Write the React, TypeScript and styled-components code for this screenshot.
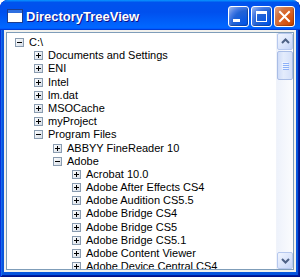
import React from 'react';
import styled, { createGlobalStyle } from 'styled-components';

const Global = createGlobalStyle`
  html, body { margin: 0; padding: 0; background: #ffffff; }
  body { font-family: "Liberation Sans", Arial, sans-serif; }
`;

const Window = styled.div`
  width: 300px;
  height: 277px;
  display: flex;
  flex-direction: column;
  background: #0855dd;
  border-radius: 8px 8px 0 0;
  overflow: hidden;
  box-shadow: inset 1px 0 #0831d9, inset -1px -1px #00138c, inset 2px 0 #166aee,
    inset -2px -2px #001ea0;
`;

const TitleBar = styled.div`
  height: 30px;
  flex: none;
  display: flex;
  align-items: center;
  padding: 2px 5px 0 7px;
  box-sizing: border-box;
  background: linear-gradient(
    180deg,
    #0997ff,
    #0053ee 8%,
    #0050ee 40%,
    #06f 88%,
    #06f 93%,
    #005bff 95%,
    #003dd7 96%,
    #003dd7
  );
  border-radius: 8px 8px 0 0;
`;

const Title = styled.span`
  flex: 1;
  margin-left: 3px;
  color: #ffffff;
  font-weight: bold;
  font-size: 13px;
  text-shadow: 1px 1px #0f1089;
  white-space: nowrap;
`;

const Controls = styled.div`
  display: flex;
  gap: 2px;
  margin-top: 1px;
`;

const CaptionButton = styled.div<{ $close?: boolean }>`
  width: 21px;
  height: 21px;
  box-sizing: border-box;
  border: 1px solid #ffffff;
  border-radius: 3px;
  display: flex;
  align-items: center;
  justify-content: center;
  background: ${(p) =>
    p.$close
      ? 'radial-gradient(circle at 90% 90%, #cc4600 0%, #dc6527 55%, #cd7546 70%, #e5a58a 100%)'
      : 'radial-gradient(circle at 90% 90%, #0054e9 0%, #2263d5 55%, #4479e4 70%, #a3bbec 100%)'};
  box-shadow: inset -1px -1px 1px rgba(0, 0, 0, 0.25);
`;

const Body = styled.div`
  flex: 1;
  display: flex;
  padding: 0 4px 5px;
  min-height: 0;
`;

const Client = styled.div`
  flex: 1;
  display: flex;
  padding: 2px;
  background: #f2f1ec;
  min-height: 0;
`;

const Tree = styled.div`
  flex: 1;
  display: flex;
  border: 1px solid #7f9db9;
  background: #ffffff;
  min-height: 0;
  overflow: hidden;
`;

const TreeList = styled.div`
  flex: 1;
  padding-top: 3px;
  overflow: hidden;
  min-width: 0;
`;

const Row = styled.div<{ $level: number }>`
  height: 13.2px;
  display: flex;
  align-items: center;
  padding-left: ${(p) => 8 + p.$level * 19}px;
  white-space: nowrap;
`;

const Label = styled.span`
  margin-left: 5px;
  font-size: 11px;
  line-height: 13.2px;
  color: #000000;
`;

const ScrollBar = styled.div`
  width: 17px;
  flex: none;
  display: flex;
  flex-direction: column;
  background: linear-gradient(90deg, #eef2fb, #fbfcfe);
  border-left: 1px solid #f0f3fa;
  box-sizing: border-box;
`;

const ScrollButton = styled.div`
  height: 17px;
  flex: none;
  box-sizing: border-box;
  border: 1px solid #b6c8ee;
  border-radius: 2px;
  background: linear-gradient(135deg, #f1f5fe 0%, #d8e3fb 60%, #c4d4f7 100%);
  display: flex;
  align-items: center;
  justify-content: center;
`;

const Thumb = styled.div`
  height: 29px;
  flex: none;
  margin-top: 1px;
  box-sizing: border-box;
  border: 1px solid #a9bde6;
  border-radius: 2px;
  background: linear-gradient(90deg, #cfdcf8 0%, #e4ecfc 40%, #d4e0f9 100%);
  display: flex;
  align-items: center;
  justify-content: center;
`;

const Track = styled.div`
  flex: 1;
`;

const ExpandGlyph = ({ open }: { open: boolean }) => (
  <svg width="9" height="9" viewBox="0 0 9 9" style={{ flex: 'none' }}>
    <defs>
      <linearGradient id={open ? 'gm' : 'gp'} x1="0" y1="0" x2="1" y2="1">
        <stop offset="0" stopColor="#ffffff" />
        <stop offset="1" stopColor="#d3dbe5" />
      </linearGradient>
    </defs>
    <rect x="0.5" y="0.5" width="8" height="8" fill={`url(#${open ? 'gm' : 'gp'})`} stroke="#8a9cb0" />
    <rect x="2" y="4" width="5" height="1" fill="#000" />
    {!open && <rect x="4" y="2" width="1" height="5" fill="#000" />}
  </svg>
);

const AppIcon = () => (
  <svg width="16" height="14" viewBox="0 0 16 14">
    <rect x="0.5" y="0.5" width="15" height="13" fill="#ffffff" stroke="#1c3d8f" />
    <rect x="1" y="1" width="14" height="3" fill="#2f6fe0" />
  </svg>
);

const items: { label: string; level: number; open: boolean }[] = [
  { label: 'C:\\', level: 0, open: true },
  { label: 'Documents and Settings', level: 1, open: false },
  { label: 'ENI', level: 1, open: false },
  { label: 'Intel', level: 1, open: false },
  { label: 'lm.dat', level: 1, open: false },
  { label: 'MSOCache', level: 1, open: false },
  { label: 'myProject', level: 1, open: false },
  { label: 'Program Files', level: 1, open: true },
  { label: 'ABBYY FineReader 10', level: 2, open: false },
  { label: 'Adobe', level: 2, open: true },
  { label: 'Acrobat 10.0', level: 3, open: false },
  { label: 'Adobe After Effects CS4', level: 3, open: false },
  { label: 'Adobe Audition CS5.5', level: 3, open: false },
  { label: 'Adobe Bridge CS4', level: 3, open: false },
  { label: 'Adobe Bridge CS5', level: 3, open: false },
  { label: 'Adobe Bridge CS5.1', level: 3, open: false },
  { label: 'Adobe Content Viewer', level: 3, open: false },
  { label: 'Adobe Device Central CS4', level: 3, open: false },
];

export default function App() {
  return (
    <>
      <Global />
      <Window>
        <TitleBar>
          <AppIcon />
          <Title>DirectoryTreeView</Title>
          <Controls>
            <CaptionButton>
              <svg width="19" height="19" viewBox="0 0 19 19">
                <rect x="4" y="12" width="7" height="3" fill="#fff" />
              </svg>
            </CaptionButton>
            <CaptionButton>
              <svg width="19" height="19" viewBox="0 0 19 19">
                <rect x="4" y="4" width="11" height="3" fill="#fff" />
                <rect x="4.5" y="4.5" width="10" height="10" fill="none" stroke="#fff" />
              </svg>
            </CaptionButton>
            <CaptionButton $close>
              <svg width="19" height="19" viewBox="0 0 19 19">
                <path d="M5 5 L14 14 M14 5 L5 14" stroke="#fff" strokeWidth="2" strokeLinecap="square" />
              </svg>
            </CaptionButton>
          </Controls>
        </TitleBar>
        <Body>
          <Client>
            <Tree>
              <TreeList>
                {items.map((it, i) => (
                  <Row key={i} $level={it.level}>
                    <ExpandGlyph open={it.open} />
                    <Label>{it.label}</Label>
                  </Row>
                ))}
              </TreeList>
              <ScrollBar>
                <ScrollButton>
                  <svg width="9" height="7" viewBox="0 0 9 7">
                    <path d="M1 5 L4.5 1.5 L8 5" fill="none" stroke="#4d6185" strokeWidth="2" />
                  </svg>
                </ScrollButton>
                <Thumb>
                  <svg width="7" height="8" viewBox="0 0 7 8">
                    <rect x="0" y="0" width="6" height="1" fill="#eef4fe" />
                    <rect x="1" y="1" width="6" height="1" fill="#8cb0f8" />
                    <rect x="0" y="2" width="6" height="1" fill="#eef4fe" />
                    <rect x="1" y="3" width="6" height="1" fill="#8cb0f8" />
                    <rect x="0" y="4" width="6" height="1" fill="#eef4fe" />
                    <rect x="1" y="5" width="6" height="1" fill="#8cb0f8" />
                    <rect x="0" y="6" width="6" height="1" fill="#eef4fe" />
                    <rect x="1" y="7" width="6" height="1" fill="#8cb0f8" />
                  </svg>
                </Thumb>
                <Track />
                <ScrollButton>
                  <svg width="9" height="7" viewBox="0 0 9 7">
                    <path d="M1 2 L4.5 5.5 L8 2" fill="none" stroke="#4d6185" strokeWidth="2" />
                  </svg>
                </ScrollButton>
              </ScrollBar>
            </Tree>
          </Client>
        </Body>
      </Window>
    </>
  );
}
